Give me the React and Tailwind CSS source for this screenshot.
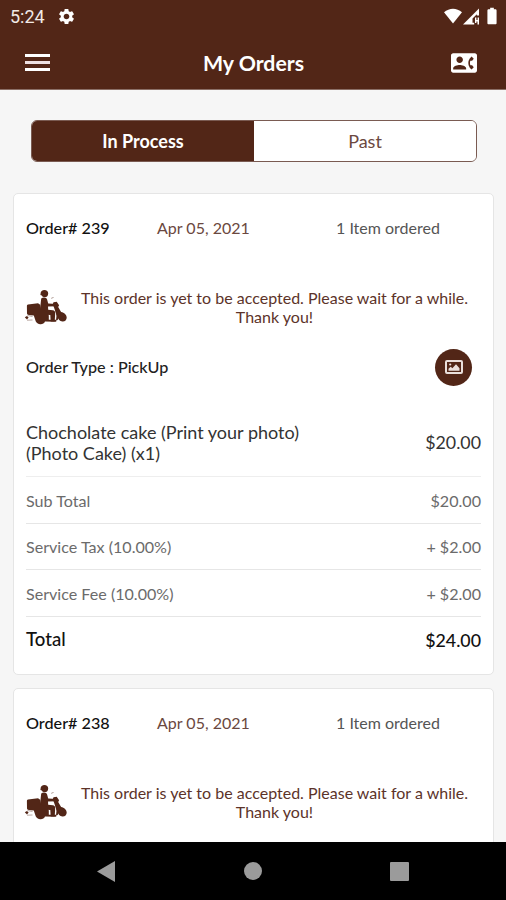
import React, { useState } from 'react';
import { MdSettings, MdContactPhone, MdBatteryFull } from 'react-icons/md';

const orders = [
  {
    id: 239,
    date: 'Apr 05, 2021',
    count: '1 Item ordered',
    details: {
      type: 'PickUp',
      item: { lines: ['Chocholate cake (Print your photo)', '(Photo Cake) (x1)'], price: '$20.00' },
      charges: [
        { label: 'Sub Total', value: '$20.00' },
        { label: 'Service Tax (10.00%)', value: '+ $2.00' },
        { label: 'Service Fee (10.00%)', value: '+ $2.00' },
      ],
      total: '$24.00',
    },
  },
  {
    id: 238,
    date: 'Apr 05, 2021',
    count: '1 Item ordered',
  },
];

function ScooterIcon() {
  return (
    <svg viewBox="0 0 43 36" className="w-[43px] h-9 shrink-0 fill-[#522617]">
      {/* rider */}
      <path d="M16.600 4.600C16.600 2.300 18.300 1 20.400 1c2.300 0 3.800 1.500 3.800 3.400 0 2.300-1.300 3.800-3.500 3.900-1.400 0-2.500-.7-2.900-1.700L16.400 6Z" />
      <path d="M17.200 9.500c2-1.500 5.200-1.100 5.900 1.100l1.100 3.900 8 .5.300 2.200-8.500.2.200 3.300 4.600.5c1.700.3 2.500 1.300 2.400 2.900l-.5 8.500h-4l-.4-6.500-4.800-.3-5.700-3.300Z" />
      {/* box, seat and rear wheel */}
      <path d="M4 15.500 14 14.300l2.200 1.500.8 4.500 5.800 2.500 2 3.800v4.200h7.400v1.900L21 32.600c-.8 1.900-2.800 3-5 2.700-2.700-.3-4.200-2-4.800-4.500l-1.400-4.200-4.900-.5c-1.200-.2-1.900-.8-1.900-1.800l-.1-7c0-1 .4-1.600 1.100-1.800Z" />
      {/* fork and front wheel */}
      <path d="m29.500 13.200 3.200-.5 2.400 3.600-.9 1.700 2.900 5c3.200.5 5.500 2.800 5.600 5.500.1 2.500-1.900 4.200-4.300 4-2.800-.2-4-2.100-5.200-4.800L30 18.500l-1.300-3.300Z" />
      <path d="m31.200 20.500 3.100 7.300-.5 3.200-1.800.5.500-5Z" />
      <path d="M.8 28.300 3 27l1.600 1.600-1.600 1.800Z" />
      <path d="m27 9 2.400-1 .3.8-2.300 1Z" className="opacity-50" />
      <path d="M3 31.200 8.500 31M3.500 26.500l5 1" className="fill-none stroke-[#522617] opacity-50" strokeWidth=".8" />
    </svg>
  );
}

function ImageIcon() {
  return (
    <svg viewBox="0 0 18 14" className="w-[18px] h-3.5">
      <rect x="1" y="1" width="16" height="12" rx="1" fill="none" stroke="#eadfdb" strokeWidth="2" />
      <path d="M3.500 10.800V8.800l2.200-2 1.700 1.500 3.600-4 3.500 4v2.500Z" fill="#eadfdb" />
      <circle cx="5.200" cy="4.500" r="1.100" fill="#eadfdb" />
    </svg>
  );
}

function StatusBar() {
  return (
    <div className="h-8 flex items-center justify-between pl-[10px] pr-[7px]">
      <div className="flex items-center gap-[12px]">
        <span className="font-['Roboto',sans-serif] text-[18px] text-[#f1e9e6]">5:24</span>
        <MdSettings className="size-[19px] text-white" />
      </div>
      <div className="flex items-center">
        <svg viewBox="0 0 18 16" className="w-[18px] h-4 fill-white">
          <path d="M0 4.200C5.400-.5 12.600-.5 18 4.200L9 15.500Z" />
        </svg>
        <svg viewBox="0 0 17 17" className="w-[17px] h-[17px] ml-px mr-px fill-white">
          <path d="M0 16.500 16 .5v7h-2.200V6.300L9.500 10.600v4.200h1.700v1.700Z" />
          <path d="M12 9.500h1.400v2.600h1.200V9.500H16v7h-1.500v-3.100h-1.100v1.700H12Z" />
        </svg>
        <MdBatteryFull className="w-[22px] h-5 -mr-1 text-white" preserveAspectRatio="none" />
      </div>
    </div>
  );
}

function Header() {
  return (
    <header className="h-[90px] shrink-0 bg-[#522617] border-b border-[#8b6f66]">
      <StatusBar />
      <div className="h-[61px] flex items-center justify-between pl-[25px] pr-[29px]">
        <button className="w-[25px] flex flex-col gap-1">
          <span className="h-[3px] bg-white"></span>
          <span className="h-[3px] bg-[#eee0e2]"></span>
          <span className="h-[3px] bg-white"></span>
        </button>
        <h1 className="pl-[6px] pt-0.5 text-[21.3px] font-bold text-white whitespace-nowrap">My Orders</h1>
        <MdContactPhone className="w-[26px] h-[28px] text-white" />
      </div>
    </header>
  );
}

function OrderDetails({ details }) {
  return (
    <>
      <div className="flex items-center justify-between h-[30px] pr-[9px]">
        <p className="text-[16.2px] font-medium text-[#222]">Order Type : {details.type}</p>
        <button className="size-[37px] rounded-full bg-[#522617] flex items-center justify-center">
          <ImageIcon />
        </button>
      </div>

      <div className="flex items-center justify-between h-[95px] pt-[27px] border-b border-[#eee] text-[18px] leading-[21px] text-[#333]">
        <p>
          {details.item.lines[0]}
          <br />
          {details.item.lines[1]}
        </p>
        <p className="text-[17.8px]">{details.item.price}</p>
      </div>

      {details.charges.map((charge) => (
        <div
          key={charge.label}
          className="flex items-center justify-between h-[46.7px] pt-[2px] border-b border-[#e6e6e6] text-[16.1px] text-[#6b6b6b]"
        >
          <p>{charge.label}</p>
          <p>{charge.value}</p>
        </div>
      ))}

      <div className="flex items-center justify-between h-[46px] text-[17.8px] font-medium text-[#111]">
        <p className="text-[18.600px]">Total</p>
        <p>{details.total}</p>
      </div>
    </>
  );
}

function OrderCard({ order }) {
  return (
    <section className="h-[482px] shrink-0 bg-white border border-[#e5e5e5] rounded-[5px] px-3 whitespace-nowrap">
      <div className="flex items-center h-[70px] pb-0.5 text-[16px]">
        <p className="w-[131px] pt-px text-[16.2px] font-medium text-[#111]">Order# {order.id}</p>
        <p className="w-[179px] text-[#6b4840]">{order.date}</p>
        <p className="text-[#555]">{order.count}</p>
      </div>

      <div className="flex items-center h-[88px] pb-0.5 -ml-0.5">
        <ScooterIcon />
        <p className="flex-1 text-center text-[16px] leading-[19px] text-[#5c3329] pl-px">
          This order is yet to be accepted. Please wait for a while.
          <br />
          Thank you!
        </p>
      </div>

      {order.details && <OrderDetails details={order.details} />}
    </section>
  );
}

export default function App() {
  const [tab, setTab] = useState('process');

  return (
    <div className="w-[506px] h-[900px] flex flex-col overflow-hidden bg-[#f6f6f6] font-['Lato',sans-serif]">
      <Header />

      <main className="flex-1 min-h-0 overflow-hidden flex flex-col pl-[13px] pr-3 pt-[30px]">
        {/* tabs */}
        <div className="h-[42px] shrink-0 ml-[18px] mr-[17px] mb-[31px] grid grid-cols-2 rounded-md border border-[#7a5b52] overflow-hidden text-[18px]">
          <button
            onClick={() => setTab('process')}
            className={tab === 'process' ? 'bg-[#522617] text-white font-bold' : 'bg-white text-[#6b4840]'}
          >
            In Process
          </button>
          <button
            onClick={() => setTab('past')}
            className={tab === 'past' ? 'bg-[#522617] text-white font-bold' : 'bg-white text-[#6b4840]'}
          >
            Past
          </button>
        </div>

        <div className="flex flex-col gap-[13px]">
          {orders.map((order) => (
            <OrderCard key={order.id} order={order} />
          ))}
        </div>
      </main>

      {/* system navigation */}
      <nav className="h-[58px] shrink-0 bg-black flex items-center justify-between pl-[97px] pr-[97px]">
        <svg viewBox="0 0 18 21" className="w-[18px] h-[21px] fill-[#9b9b9b]">
          <path d="M0 10.500 18 0v21Z" />
        </svg>
        <span className="size-[18px] rounded-full bg-[#9b9b9b]"></span>
        <span className="size-[19px] rounded-[1px] bg-[#9b9b9b]"></span>
      </nav>
    </div>
  );
}
